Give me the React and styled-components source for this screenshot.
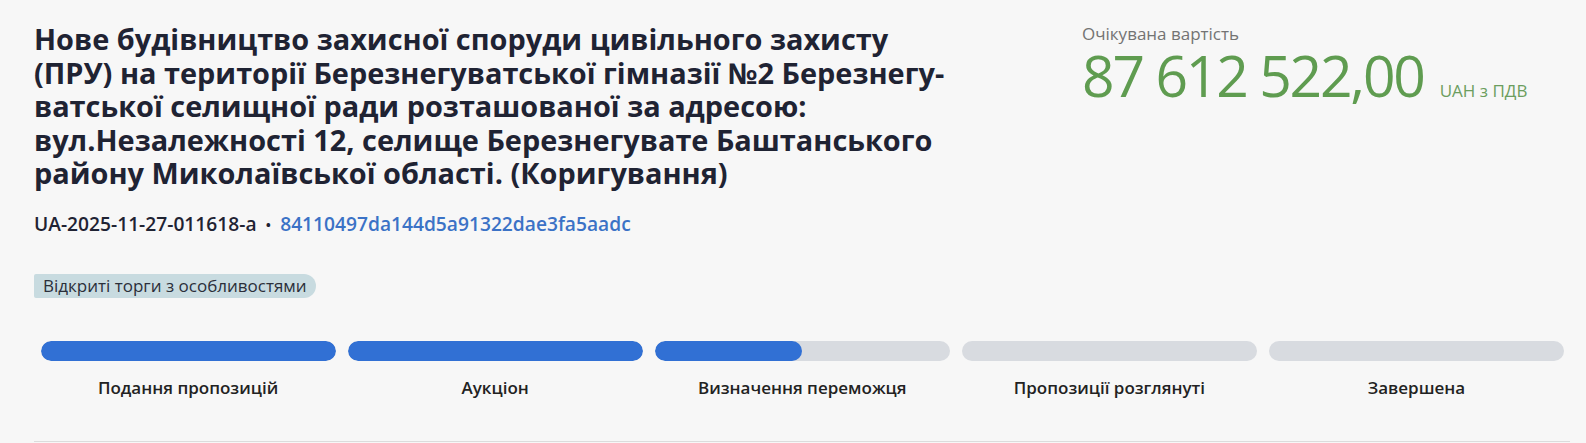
import React from "react";
import styled, { createGlobalStyle } from "styled-components";

const GlobalStyle = createGlobalStyle`
  html, body {
    margin: 0;
    padding: 0;
    background: #f7f7f7;
  }
  body {
    font-family: "Open Sans", "Noto Sans", "Liberation Sans", sans-serif;
    color: #1f2333;
  }
`;

const stages = [
  { title: "Подання пропозицій", progress: 100 },
  { title: "Аукціон", progress: 100 },
  { title: "Визначення переможця", progress: 50 },
  { title: "Пропозиції розглянуті", progress: 0 },
  { title: "Завершена", progress: 0 },
];

// lines broken as the tender card shows them
const titleLines = [
  "Нове будівництво захисної споруди цивільного захисту",
  "(ПРУ) на території Березнегуватської гімназії №2 Березнегу-",
  "ватської селищної ради розташованої за адресою:",
  "вул.Незалежності 12, селище Березнегувате Баштанського",
  "району Миколаївської області. (Коригування)",
];

const App = () => {
  return (
    <>
      <GlobalStyle />
      <StyledHeader>
        <div className="top">
          <div className="info">
            <h1 lang="uk">
              {titleLines.map((line, i) => (
                <span key={i}>{line}</span>
              ))}
            </h1>
            <Ids>
              <span>UA-2025-11-27-011618-a</span>
              <span className="dot">•</span>
              <a href="#">84110497da144d5a91322dae3fa5aadc</a>
            </Ids>
            <Tag>Відкриті торги з особливостями</Tag>
          </div>
          <Price>
            <p className="label">Очікувана вартість</p>
            <div className="value">
              <span className="amount">87 612 522,00</span>
              <span className="currency">UAH з ПДВ</span>
            </div>
          </Price>
        </div>

        <Stages>
          {stages.map((stage) => (
            <Stage key={stage.title}>
              <Track>
                <Fill style={{ width: `${stage.progress}%` }} />
              </Track>
              <p>{stage.title}</p>
            </Stage>
          ))}
        </Stages>
      </StyledHeader>
    </>
  );
};

export default App;

const StyledHeader = styled.div`
  margin: 0 16px 0 34px;
  border-bottom: 1px solid #dcdcdc;
  height: 442px;
  box-sizing: border-box;

  .top {
    display: flex;
    justify-content: space-between;
  }

  .info {
    width: 940px;
    padding-top: 22px;
  }

  h1 {
    margin: 0;
    font-size: 28.9px;
    line-height: 33.5px;
    font-weight: 700;
    color: #1f2333;
    white-space: nowrap;

    span {
      display: block;
    }
  }
`;

const Ids = styled.div`
  display: flex;
  align-items: center;
  gap: 9px;
  margin-top: 22px;
  font-size: 19.2px;
  line-height: 24px;
  font-weight: 600;
  color: #1f2333;

  .dot {
    font-size: 15px;
  }

  a {
    color: #3b72c6;
    text-decoration: none;
  }
`;

const Tag = styled.span`
  display: inline-block;
  margin-top: 38px;
  padding: 0 9px;
  height: 24px;
  line-height: 24px;
  font-size: 17px;
  color: #2b2f3a;
  background: #c8dbe0;
  border-radius: 2px 12px 12px 2px;
`;

const Price = styled.div`
  width: 488px;
  padding-top: 22px;

  .label {
    margin: 0;
    font-size: 17px;
    line-height: 23px;
    color: #737373;
  }

  .value {
    display: flex;
    align-items: baseline;
    gap: 16px;
  }

  .amount {
    font-size: 57px;
    line-height: 60px;
    color: #5f9c50;
    letter-spacing: -2.2px;
  }

  .currency {
    font-size: 17px;
    color: #6c9e5e;
  }
`;

const Stages = styled.div`
  display: grid;
  grid-template-columns: repeat(5, 1fr);
  gap: 12px;
  margin-top: 43px;
  padding: 0 6px 0 6.5px;
`;

const Stage = styled.div`
  p {
    margin: 15px 0 0;
    text-align: center;
    font-size: 17px;
    line-height: 23px;
    font-weight: 600;
    color: #222;
  }
`;

const Track = styled.div`
  height: 20px;
  border-radius: 10px;
  background: #d8dbe0;
  overflow: hidden;
`;

const Fill = styled.div`
  height: 100%;
  border-radius: 10px;
  background: #3170d4;
`;
